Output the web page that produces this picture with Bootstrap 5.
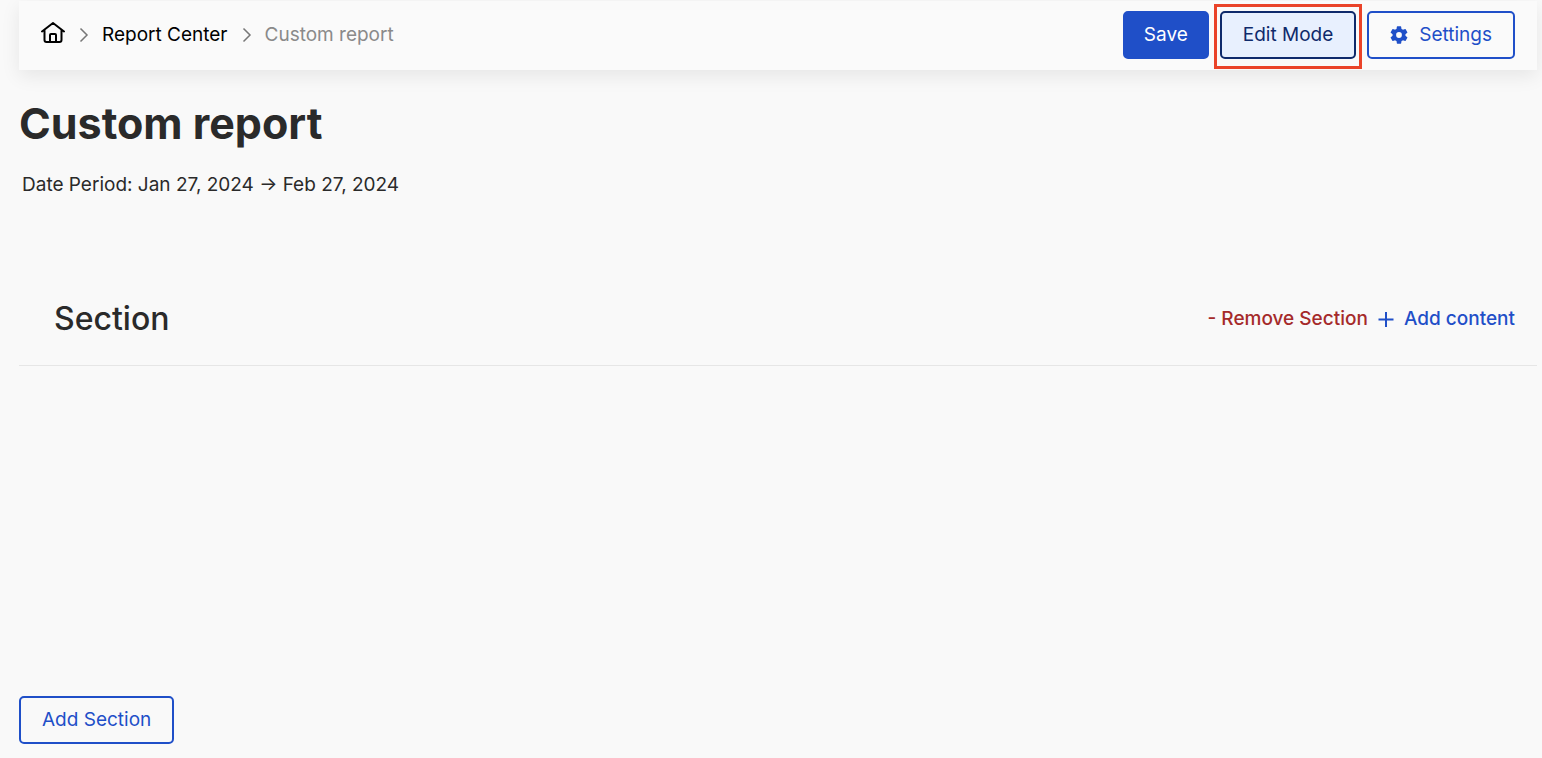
<!DOCTYPE html>
<html lang="en">
<head>
<meta charset="utf-8">
<meta name="viewport" content="width=device-width, initial-scale=1">
<title>Custom report</title>
<link href="https://cdn.jsdelivr.net/npm/bootstrap@5.3.0/dist/css/bootstrap.min.css" rel="stylesheet">
<style>
  body { font-family: Inter, "Liberation Sans", sans-serif; font-size: 19px; line-height: 24px; color: #2a2a2a; background: #f9f9f9; }
  .page { padding: 1px 5px 14px 19px; }
  .topbar { padding: 10px 22px 11px; background: #fafafa; box-shadow: 0 6px 18px rgba(0, 0, 0, .08); }
  .trail { gap: 10px; }
  .trail a { color: #000; }
  .trail .current { color: #8a8a8a; }
  .sep { color: #777; }
  .actions { gap: 11px; }
  .btn-report { --bs-btn-font-size: 19px; --bs-btn-line-height: 24px; --bs-btn-border-width: 2px; --bs-btn-border-radius: 5px;
    --bs-btn-padding-y: 10px; --bs-btn-padding-x: 21px;
    --bs-btn-color: #1f4fc8; --bs-btn-border-color: #1f4fc8; --bs-btn-hover-color: #0f2a6b; --bs-btn-hover-bg: #e8f0fe; --bs-btn-hover-border-color: #0f2a6b;
    --bs-btn-active-color: #0f2a6b; --bs-btn-active-bg: #e8f0fe; --bs-btn-active-border-color: #0f2a6b; }
  .btn-save { --bs-btn-color: #fff; --bs-btn-bg: #1f4fc8; --bs-btn-padding-x: 19px; }
  .btn-icon { gap: 11px; }
  .marked::after { content: ""; position: absolute; inset: -9px -8px -12px; border: 3px solid #ea4329; pointer-events: none; }
  .title { font-size: 43px; line-height: 52px; font-weight: 700; margin: 27px 0 24px; }
  .period { margin: 0 3px; }
  .section-head { margin-top: 76px; padding: 24px 22px 24px 35px; border-bottom: 1px solid #e6e6e6; }
  .section-title { font-size: 32px; line-height: 44px; font-weight: 500; }
  .text-action { font-weight: 500; color: #1f4fc8; background: none; border: 0; padding: 0; }
  .text-remove { color: #a52a2a; }
</style>
</head>
<body>
<div class="page d-flex flex-column min-vh-100">
  <header class="topbar d-flex align-items-center justify-content-between">
    <nav class="trail d-flex align-items-center" aria-label="Breadcrumb">
      <a href="#" class="d-flex" aria-label="Home">
        <svg width="24" height="28" viewBox="0 0 24 28" fill="none" stroke="currentColor" stroke-width="2" stroke-linecap="round" stroke-linejoin="round"><path d="M1 10.500 12 2l11 8.500M3.500 9V19a2 2 0 0 0 2 2h13a2 2 0 0 0 2-2V9M9 21v-7q0-1 1-1h4q1 0 1 1v7"/></svg>
      </a>
      <svg class="sep" width="17" height="18" viewBox="0 0 17 18" fill="none" stroke="currentColor" stroke-width="1.5"><path d="m5.500 2.500 6.500 6.500-6.500 6.500"/></svg>
      <a href="#" class="text-decoration-none">Report Center</a>
      <svg class="sep" width="17" height="18" viewBox="0 0 17 18" fill="none" stroke="currentColor" stroke-width="1.5"><path d="m5.500 2.500 6.500 6.500-6.500 6.500"/></svg>
      <span class="current" aria-current="page">Custom report</span>
    </nav>
    <div class="actions d-flex">
      <button type="button" class="btn btn-report btn-save">Save</button>
      <button type="button" class="btn btn-report active marked position-relative" aria-pressed="true">Edit Mode</button>
      <button type="button" class="btn btn-report btn-icon d-flex align-items-center">
        <svg width="18" height="18" viewBox="2 2 20 20" fill="currentColor" aria-hidden="true"><path d="M19.140 12.940a7 7 0 0 0 0-1.880l2.030-1.580a.5.5 0 0 0 .12-.61l-1.920-3.320a.5.5 0 0 0-.59-.22l-2.390.96a7 7 0 0 0-1.620-.94l-.36-2.540a.5.5 0 0 0-.48-.41h-3.840a.5.5 0 0 0-.47.41l-.36 2.540a7 7 0 0 0-1.620.94l-2.390-.96a.5.5 0 0 0-.59.22L2.740 8.870a.5.5 0 0 0 .12.61l2.030 1.580a7 7 0 0 0 0 1.880l-2.030 1.580a.5.5 0 0 0-.12.61l1.920 3.320c.12.22.37.29.59.22l2.390-.96c.5.380 1.030.7 1.620.94l.36 2.540c.05.240.24.410.48.410h3.840c.24 0 .44-.17.47-.41l.36-2.540a7 7 0 0 0 1.620-.94l2.390.96c.22.080.47 0 .59-.22l1.920-3.320a.5.5 0 0 0-.12-.61zM12 15.200a3.200 3.200 0 1 1 0-6.400 3.200 3.200 0 0 1 0 6.400z"/></svg>Settings</button>
    </div>
  </header>
  <main class="d-flex flex-column flex-grow-1">
    <h1 class="title">Custom report</h1>
    <p class="period">Date Period: Jan 27, 2024 → Feb 27, 2024</p>
    <section class="section-head d-flex align-items-center justify-content-between">
      <h2 class="section-title m-0">Section</h2>
      <div class="d-flex align-items-center">
        <button type="button" class="text-action text-remove">- Remove Section</button>
        <button type="button" class="text-action d-flex align-items-center ms-2">
          <svg class="me-2" width="20" height="22" viewBox="0 0 20 22" stroke="currentColor" stroke-width="2" aria-hidden="true"><path d="M10 4v15M2.500 11.500h15"/></svg>Add content</button>
      </div>
    </section>
    <div class="mt-auto"><button type="button" class="btn btn-report">Add Section</button></div>
  </main>
</div>
<script src="https://cdn.jsdelivr.net/npm/bootstrap@5.3.0/dist/js/bootstrap.bundle.min.js"></script>
</body>
</html>
